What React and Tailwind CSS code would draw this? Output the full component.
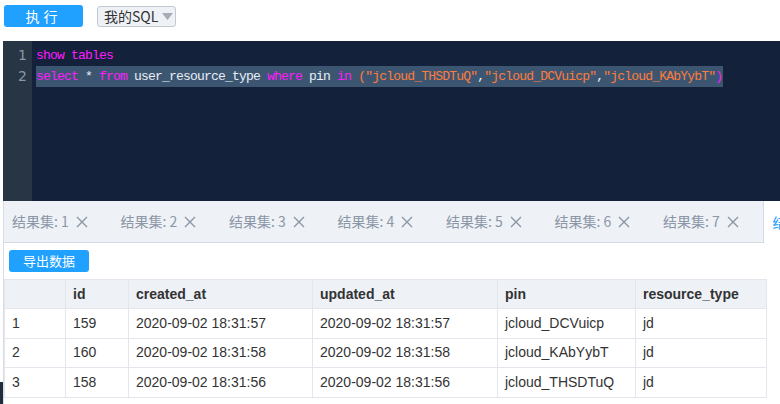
const rows = [
  { n: 1, id: 159, created: '2020-09-02 18:31:57', updated: '2020-09-02 18:31:57', pin: 'jcloud_DCVuicp', type: 'jd' },
  { n: 2, id: 160, created: '2020-09-02 18:31:58', updated: '2020-09-02 18:31:58', pin: 'jcloud_KAbYybT', type: 'jd' },
  { n: 3, id: 158, created: '2020-09-02 18:31:56', updated: '2020-09-02 18:31:56', pin: 'jcloud_THSDTuQ', type: 'jd' },
]

const cols = [
  { key: 'n', label: '', w: 'w-[61px]' },
  { key: 'id', label: 'id', w: 'w-[63px]' },
  { key: 'created', label: 'created_at', w: 'w-[184px]' },
  { key: 'updated', label: 'updated_at', w: 'w-[185px]' },
  { key: 'pin', label: 'pin', w: 'w-[138px]' },
  { key: 'type', label: 'resource_type', w: 'w-[131px]' },
]

const K = ({ children }) => <span className="text-[#ff1aff]">{children}</span>
const S = ({ children }) => <span className="text-[#ff7b3a]">{children}</span>
const W = ({ children }) => <span className="text-[#e8eef5]">{children}</span>

function CloseX() {
  return (
    <svg className="w-[12px] h-[12px]" viewBox="0 0 12 12" fill="none" stroke="currentColor" strokeWidth="1.4">
      <path d="M1 1l10 10M11 1L1 11" />
    </svg>
  )
}

export default function App() {
  const cjk = "font-['Noto_Sans_CJK_SC','Liberation_Sans',sans-serif]"
  return (
    <div className="w-[780px] h-[404px] overflow-hidden bg-white flex flex-col font-['Liberation_Sans','Noto_Sans_CJK_SC',sans-serif]">
      {/* Toolbar */}
      <div className="h-[41px] shrink-0 flex items-start pt-[5px] pl-[4px]">
        <button className={`w-[79px] h-[22px] rounded-[3px] bg-[#20a0ff] text-white text-[14px] leading-[22px] tracking-[4px] ${cjk}`}>
          执行
        </button>
        <div className="ml-[14px] mt-[1px] w-[79px] h-[21px] rounded-[3px] border border-[#c4c9d1] bg-[#eef1f6] flex items-center pl-[6px] gap-[4px] text-[14px] text-[#333]">
          <span className={cjk}>我的SQL</span>
          <svg className="w-[11px] h-[7px]" viewBox="0 0 11 7">
            <path d="M0 0h11L5.5 7z" fill="#a5acb6" />
          </svg>
        </div>
      </div>

      <div className="flex-1 flex">
        <div className="w-[3px] shrink-0 flex flex-col justify-end">
          <div className="h-[22px] bg-[#1f2c3c]" />
        </div>
        <div className="flex-1 flex flex-col min-w-0">
          {/* Editor */}
          <div className="h-[160px] shrink-0 flex bg-[#13223a] font-['Liberation_Mono',monospace] text-[13px] tracking-[-0.8px]">
            <div className="w-[29px] bg-[#273545] pt-[4px] pr-[5px] text-right text-[#8a97a6] text-[14px] tracking-normal font-['DejaVu_Sans',sans-serif]">
              <div className="h-[21px] leading-[21px]">1</div>
              <div className="h-[21px] leading-[21px]">2</div>
            </div>
            <div className="flex-1 pt-[4px] pl-[4px] whitespace-pre">
              <div className="h-[21px] leading-[21px]">
                <K>show tables</K>
              </div>
              <div className="h-[21px] leading-[21px]">
                <span className="inline-block bg-[#3c5672] pr-[1px]">
                  <K>select</K><W> * </W><K>from</K><W> user_resource_type </W><K>where</K><W> pin </W><K>in</K><W> </W>
                  <S>("jcloud_THSDTuQ"</S><W>,</W><S>"jcloud_DCVuicp"</S><W>,</W><S>"jcloud_KAbYybT"</S><K>)</K>
                </span>
              </div>
            </div>
          </div>

          {/* Result tabs */}
          <div className="h-[42px] shrink-0 flex border-l border-[#d8dde5]">
            {[1, 2, 3, 4, 5, 6, 7].map((i) => (
              <div
                key={i}
                className={`w-[108.5px] shrink-0 pl-[8px] flex items-center gap-[7px] bg-[#eef1f6] border-b border-[#d5dbe4] text-[14px] text-[#8b96a6] ${i === 7 ? 'border-r' : ''}`}
              >
                <span className={cjk}>结果集: {i}</span>
                <CloseX />
              </div>
            ))}
            <div className={`flex-1 pl-[9px] flex items-center text-[14px] text-[#20a0ff] whitespace-nowrap overflow-hidden ${cjk}`}>
              结果集: 8
            </div>
          </div>

          {/* Result content */}
          <div className="flex-1 border-l border-[#d8dde5] pt-[6px]">
            <button className={`ml-[5px] w-[80px] h-[22px] rounded-[3px] bg-[#20a0ff] text-white text-[13px] leading-[22px] ${cjk}`}>
              导出数据
            </button>
            <table className="mt-[6px] border-collapse text-[14px] text-[#333] table-fixed">
              <thead>
                <tr className="bg-[#eef1f6]">
                  {cols.map((c) => (
                    <th key={c.key} className={`${c.w} h-[29px] px-[7px] text-left font-bold border border-[#e3e7ed]`}>
                      {c.label}
                    </th>
                  ))}
                </tr>
              </thead>
              <tbody>
                {rows.map((r) => (
                  <tr key={r.n}>
                    {cols.map((c) => (
                      <td key={c.key} className="h-[29.5px] px-[7px] text-left font-normal border border-[#e3e7ed]">
                        {r[c.key]}
                      </td>
                    ))}
                  </tr>
                ))}
              </tbody>
            </table>
          </div>
        </div>
      </div>
    </div>
  )
}
